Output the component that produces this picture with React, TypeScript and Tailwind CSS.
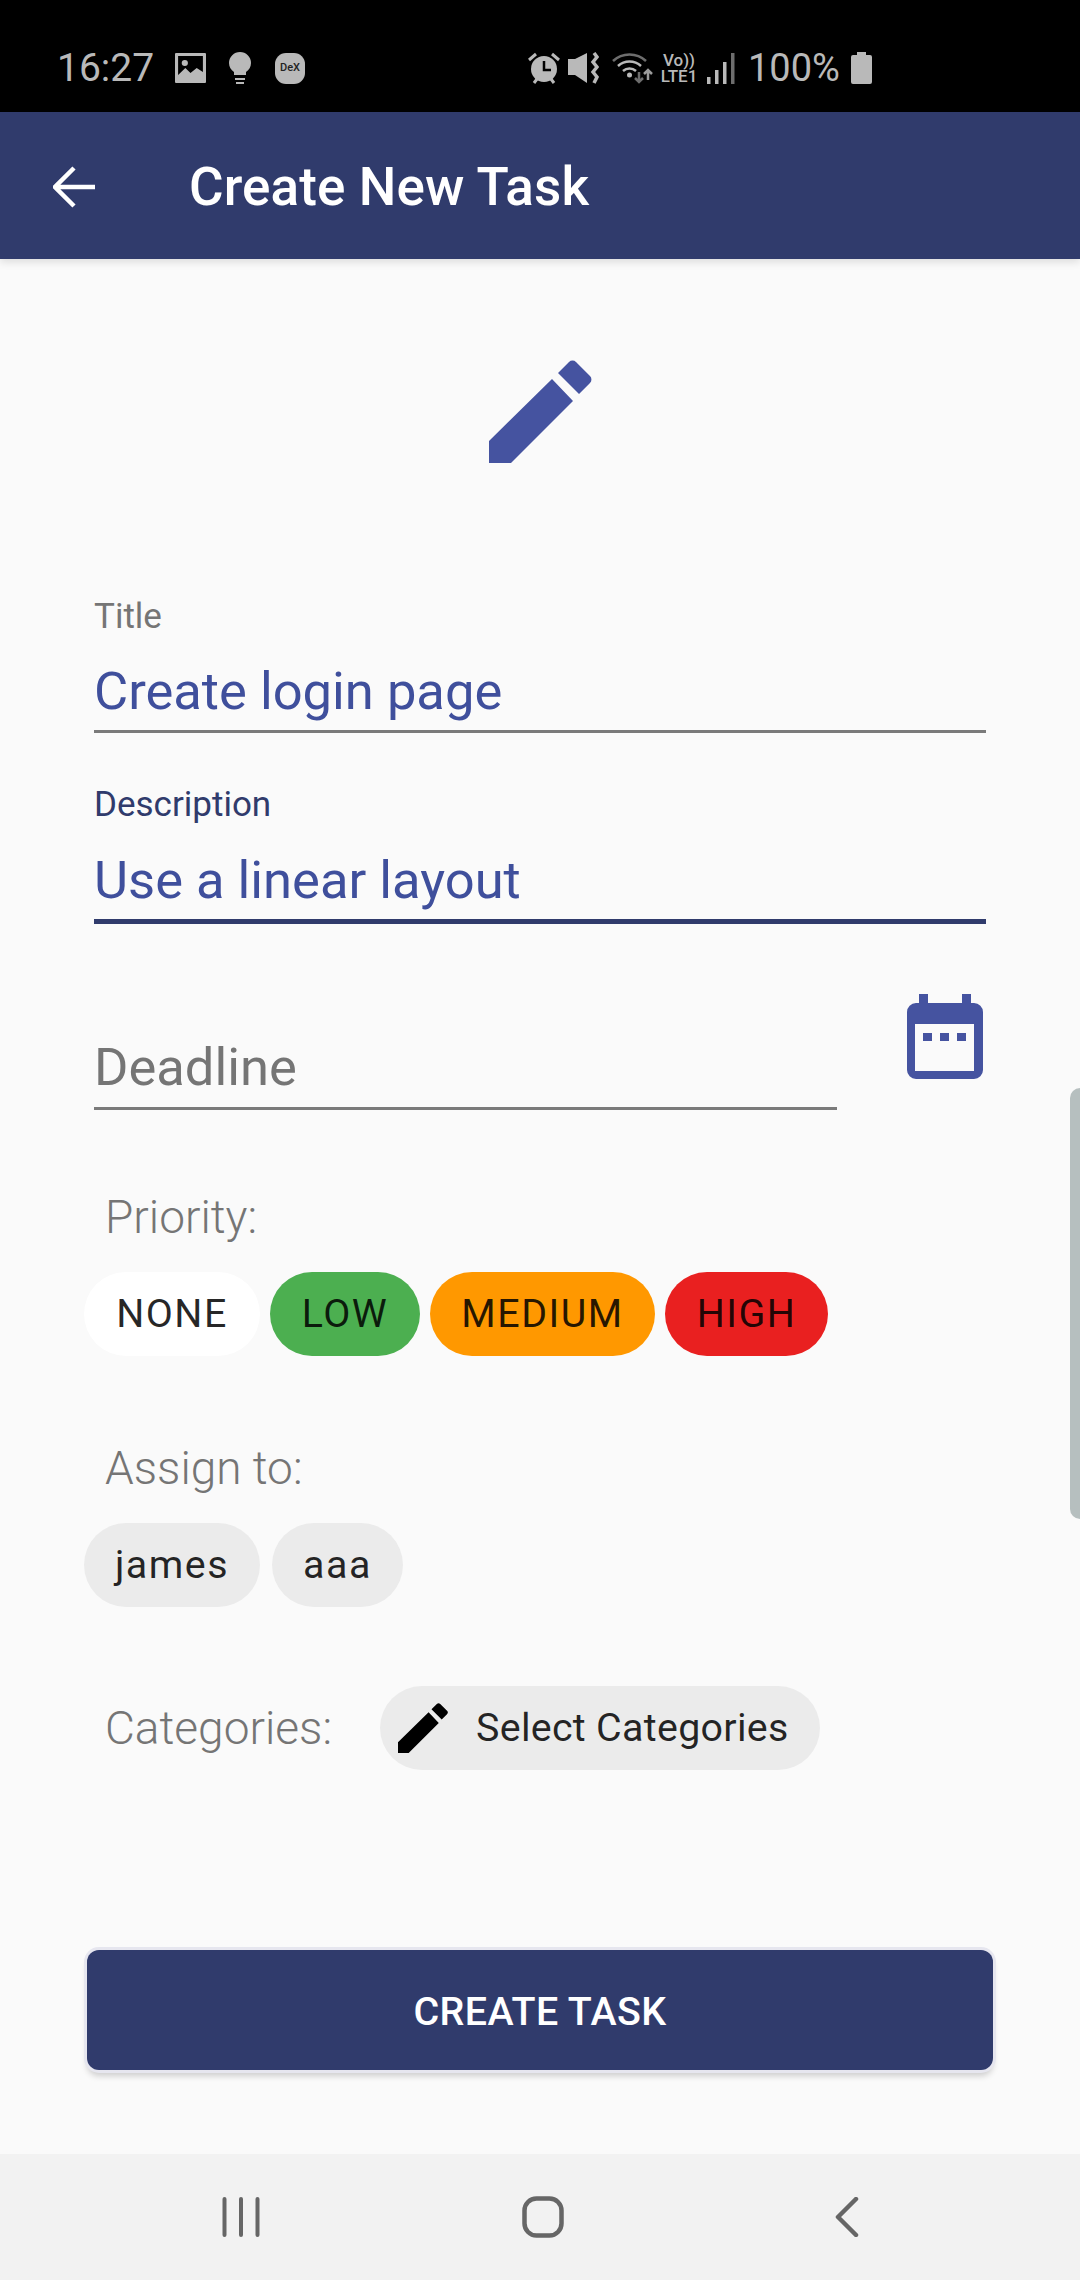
import React from "react";

const font = { fontFamily: "Roboto, sans-serif" };

function StatusBar() {
  return (
    <div className="h-[112px] bg-black flex items-center text-[#b9b9b9] shrink-0 pt-[24px]">
      <span className="ml-[57px] text-[39px] leading-none w-[95px]">16:27</span>
      <svg className="ml-[23px]" width="31" height="30" viewBox="0 0 30 30" preserveAspectRatio="none">
        <path fill="#b9b9b9" fillRule="evenodd" d="M1 0h28a1 1 0 0 1 1 1v28a1 1 0 0 1-1 1H1a1 1 0 0 1-1-1V1a1 1 0 0 1 1-1zM3 3v24h24V3zM9.500 7a3 3 0 1 1 0 6 3 3 0 0 1 0-6zM3 22l7-7 5 5 6-5 6 4v8H3z" />
      </svg>
      <svg className="ml-[23px]" width="22" height="32" viewBox="0 0 22 32">
        <path fill="#b9b9b9" d="M11 0a11 11 0 0 1 11 11c0 4-2 7-5 9v3H5v-3c-3-2-5-5-5-9A11 11 0 0 1 11 0zM6 26h10v2H6zM7 30h8v2H7z" />
      </svg>
      <div className="ml-[24px] w-[30px] h-[31px] rounded-[11px] bg-[#b9b9b9] flex items-center justify-center text-[11px] text-[#222] font-medium">DeX</div>
      <svg className="ml-[222px]" width="34" height="32" viewBox="0 0 34 32">
        <circle cx="17" cy="17" r="13" fill="#b9b9b9" />
        <path d="M17 9v9h7" stroke="#000" strokeWidth="2.500" fill="none" />
        <path d="M2 8l7-6M32 8l-7-6M7 31l3-4M27 31l-3-4" stroke="#b9b9b9" strokeWidth="3" fill="none" />
      </svg>
      <svg className="ml-[6px]" width="32" height="32" viewBox="0 0 32 32">
        <path fill="#b9b9b9" d="M1 7h7L20 1v30L8 23H1z" />
        <path stroke="#b9b9b9" strokeWidth="3.500" fill="none" d="M27 1l3 4-4 5 4 5-4 5 4 5-3 6" />
      </svg>
      <svg className="ml-[13px]" width="42" height="32" viewBox="0 0 42 32">
        <path d="M1 9a24 24 0 0 1 33 0" stroke="#6d6d6d" strokeWidth="2.500" fill="none" />
        <path d="M6 14a17 17 0 0 1 23 0M11 19a10 10 0 0 1 13 0" stroke="#b9b9b9" strokeWidth="2.500" fill="none" />
        <circle cx="17.500" cy="23" r="2.500" fill="#b9b9b9" />
        <path d="M27 20v10M23 26l4 4 4-4" stroke="#6d6d6d" strokeWidth="2.500" fill="none" />
        <path d="M36 28V18M32 22l4-4 4 4" stroke="#9a9a9a" strokeWidth="2.500" fill="none" />
      </svg>
      <div className="ml-[5px] w-[40px] flex flex-col items-center text-[17px] leading-[16px] font-medium">
        <span>Vo))</span>
        <span>LTE1</span>
      </div>
      <svg className="ml-[8px]" width="28" height="31" viewBox="0 0 28 31">
        <rect x="0" y="24" width="3.500" height="7" fill="#b9b9b9" />
        <rect x="8" y="17" width="3.500" height="14" fill="#b9b9b9" />
        <rect x="16" y="9" width="3.500" height="22" fill="#b9b9b9" />
        <rect x="24" y="0" width="3.500" height="31" fill="#6d6d6d" />
      </svg>
      <span className="ml-[13px] text-[38px] leading-none w-[93px]">100%</span>
      <svg className="ml-[10px]" width="21" height="32" viewBox="0 0 21 32">
        <path fill="#b9b9b9" d="M6 0h9v3h4a2 2 0 0 1 2 2v25a2 2 0 0 1-2 2H2a2 2 0 0 1-2-2V5a2 2 0 0 1 2-2h4z" />
      </svg>
    </div>
  );
}

function Chip({ label, bg, w }: { label: string; bg: string; w: string }) {
  return (
    <div className={`h-[84px] rounded-full flex items-center justify-center text-[39.4px] tracking-[1.5px] text-black/85 ${bg} ${w}`}>
      {label}
    </div>
  );
}

function PencilIcon({ size, color }: { size: number; color: string }) {
  return (
    <svg width={size} height={size} viewBox="0 0 103 103">
      <path fill={color} d="M0 103V81L63 19 84 41 22 103zM69 13 80 2a5 5 0 0 1 7 0L101 16a5 5 0 0 1 0 7L90 34z" />
    </svg>
  );
}

export default function App() {
  return (
    <div style={font} className="w-[1080px] h-[2280px] flex flex-col bg-[#fafafa] overflow-hidden">
      <StatusBar />
      <header className="h-[147px] shrink-0 bg-[#303b6c] flex items-center pt-[2px] shadow-[0_3px_8px_rgba(0,0,0,0.12)] z-10">
        <svg className="ml-[53px]" width="42" height="42" viewBox="0 0 42 42">
          <path d="M42 21H3M21 2 2 21l19 19" stroke="#fff" strokeWidth="4.500" fill="none" />
        </svg>
        <h1 className="ml-[94px] pt-[2px] text-[53px] leading-none font-medium tracking-[0.1px] text-white">Create New Task</h1>
      </header>

      <main className="relative flex-1 flex flex-col">
        <div className="flex justify-center pt-[101px]">
          <PencilIcon size={103} color="#4553a0" />
        </div>

        <div className="mt-[135px] ml-[94px] w-[892px] flex flex-col">
          <div className="text-[35px] leading-[38px] text-[#757575]">Title</div>
          <div className="mt-[27px] text-[52.5px] leading-[56px] text-[#3f4f9c] border-b-[3px] border-[#7a7a7a] pb-[11px]">Create login page</div>
          <div className="mt-[53px] text-[35px] leading-[38px] text-[#303b6c]">Description</div>
          <div className="mt-[28px] text-[52.5px] leading-[56px] text-[#3f4f9c] border-b-[5px] border-[#303b6c] pb-[11px]">Use a linear layout</div>
        </div>

        <div className="mt-[70px] ml-[94px] w-[892px] flex items-start justify-between">
          <div className="w-[743px] mt-[45px] text-[52.5px] leading-[56px] text-[#757575] border-b-[3px] border-[#7a7a7a] pb-[12px]">Deadline</div>
          <svg className="mr-[3px]" width="76" height="85" viewBox="0 0 76 85">
            <path fill="#4553a0" fillRule="evenodd" d="M12 0h9v9h34V0h9v9h3a9 9 0 0 1 9 9v58a9 9 0 0 1-9 9H9a9 9 0 0 1-9-9V18a9 9 0 0 1 9-9h3zM8 30v47h59V30zM16 39h9v8h-9zM33 39h9v8h-9zM50 39h9v8h-9z" />
          </svg>
        </div>

        <div className="mt-[80px] ml-[105px] text-[46px] leading-[54px] font-light text-[#757575]">Priority:</div>
        <div className="mt-[28px] ml-[84px] flex gap-[10px]">
          <Chip label="NONE" bg="bg-white" w="w-[176px]" />
          <Chip label="LOW" bg="bg-[#4caf50]" w="w-[150px]" />
          <Chip label="MEDIUM" bg="bg-[#ff9800]" w="w-[225px]" />
          <Chip label="HIGH" bg="bg-[#e92020]" w="w-[163px]" />
        </div>

        <div className="mt-[85px] ml-[105px] text-[46px] leading-[54px] font-light text-[#757575]">Assign to:</div>
        <div className="mt-[28px] ml-[84px] flex gap-[12px]">
          <Chip label="james" bg="bg-[#ebebeb]" w="w-[176px]" />
          <Chip label="aaa" bg="bg-[#ebebeb]" w="w-[131px]" />
        </div>

        <div className="mt-[79px] ml-[105px] flex items-center">
          <div className="text-[46px] leading-[54px] font-light text-[#757575] w-[275px]">Categories:</div>
          <div className="h-[84px] w-[440px] rounded-full bg-[#ebebeb] flex items-center text-[39.4px] tracking-[0.3px] text-black/85 pl-[18px]">
            <PencilIcon size={50} color="#000" />
            <span className="ml-[28px]">Select Categories</span>
          </div>
        </div>

        <button className="mt-[180px] ml-[87px] w-[906px] h-[120px] pt-[4px] rounded-[12px] bg-[#303b6c] text-white text-[39.4px] font-medium tracking-[0.4px] shadow-[0_0_0_3px_#e6e6ef,0_6px_6px_rgba(0,0,0,0.18)]">
          CREATE TASK
        </button>

        <div className="absolute right-0 top-[829px] w-[10px] h-[431px] rounded-l-[10px] bg-[#b6bfbf]" />
      </main>

      <nav className="h-[126px] shrink-0 bg-[#f2f2f2] relative flex items-center">
        <svg className="ml-[222px]" width="38" height="40" viewBox="0 0 38 40">
          <path d="M2.500 2v36M19 2v36M35.500 2v36" stroke="#666" strokeWidth="4" strokeLinecap="round" fill="none" />
        </svg>
        <svg className="ml-[262px]" width="42" height="42" viewBox="0 0 42 42">
          <rect x="2.500" y="2.500" width="37" height="37" rx="12" stroke="#666" strokeWidth="4.500" fill="none" />
        </svg>
        <svg className="ml-[271px]" width="24" height="40" viewBox="0 0 24 40">
          <path d="M21 2 3 20l18 18" stroke="#666" strokeWidth="4.500" strokeLinecap="round" strokeLinejoin="round" fill="none" />
        </svg>
      </nav>
    </div>
  );
}
